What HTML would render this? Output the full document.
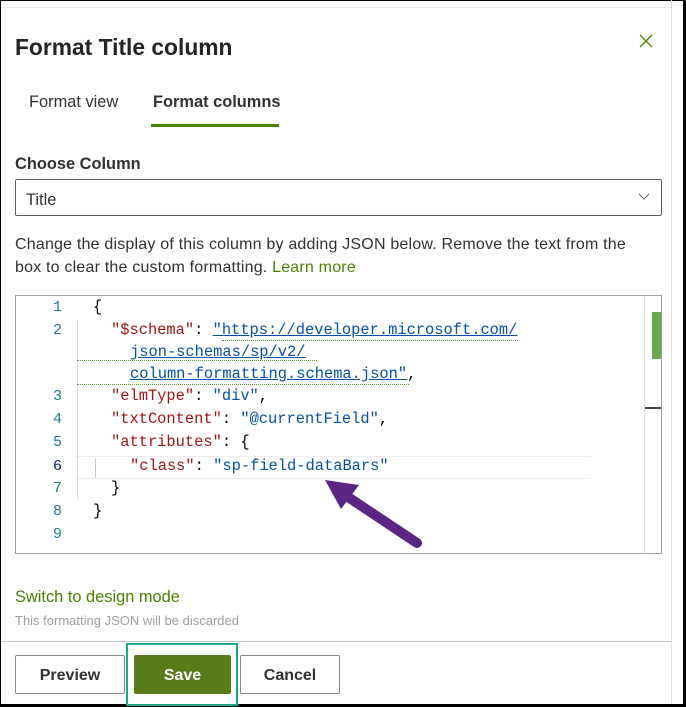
<!DOCTYPE html>
<html><head><meta charset="utf-8"><style>
*{margin:0;padding:0;box-sizing:border-box}
body{width:686px;height:707px;background:#fff;font-family:"Liberation Sans",sans-serif;position:relative;overflow:hidden;color:#323130}
.abs{position:absolute}
.code{font-family:"Liberation Mono",monospace;font-size:15.4px;white-space:pre;line-height:23px}
.ln{position:absolute;left:40px;width:22px;text-align:right;color:#237893;font-family:"Liberation Mono",monospace;font-size:15px;line-height:23px}
.k{color:#a31515}.s{color:#0451a5}.p{color:#000}
.u{text-decoration:underline;text-decoration-color:#0451a5}
.btn{position:absolute;top:655px;height:39px;border:1px solid #8a8886;border-radius:2px;font-weight:bold;font-size:16px;display:flex;align-items:center;justify-content:center;color:#323130;padding-top:3px}
</style></head><body>
<div class="abs" style="left:0;top:0;width:686px;height:1px;background:#000"></div>
<div class="abs" style="left:0;top:0;width:1px;height:707px;background:#000"></div>
<div class="abs" style="left:683px;top:0;width:3px;height:707px;background:#000"></div>
<div class="abs" style="left:671px;top:0;width:1px;height:707px;background:#e1dfdd"></div>
<div class="abs" style="left:0;top:704px;width:686px;height:3px;background:#000"></div>
<div class="abs" style="left:1px;top:7px;width:670px;height:1px;background:#edebe9"></div>

<div class="abs" style="left:15px;top:34px;font-size:22.8px;font-weight:bold;color:#252423">Format Title column</div>
<svg class="abs" style="left:639px;top:34px" width="14" height="14"><path d="M1 1L13 13M13 1L1 13" stroke="#498205" stroke-width="1.3"/></svg>

<div class="abs" style="left:29px;top:93px;font-size:16.4px">Format view</div>
<div class="abs" style="left:153px;top:93px;font-size:16.4px;font-weight:bold">Format columns</div>
<div class="abs" style="left:151px;top:124px;width:128px;height:3px;background:#498205"></div>

<div class="abs" style="left:15px;top:155px;font-size:16.4px;font-weight:bold">Choose Column</div>
<div class="abs" style="left:15px;top:179px;width:647px;height:37px;border:1px solid #605e5c;border-radius:2px"></div>
<div class="abs" style="left:26px;top:191px;font-size:16.4px">Title</div>
<svg class="abs" style="left:638px;top:193px" width="12" height="8"><path d="M1 1L6 6L11 1" fill="none" stroke="#605e5c" stroke-width="1"/></svg>

<div class="abs" style="left:15px;top:233px;width:640px;font-size:16px;letter-spacing:0.2px;line-height:23px">Change the display of this column by adding JSON below. Remove the text from the box to clear the custom formatting. <span style="color:#498205">Learn more</span></div>

<div class="abs" style="left:15px;top:295px;width:647px;height:259px;border:1px solid #a19f9d"></div>
<div class="abs" style="left:644px;top:296px;width:1px;height:257px;background:#e1dfdd"></div>
<div class="abs" style="left:652px;top:312px;width:9px;height:47px;background:#6aa84f"></div>
<div class="abs" style="left:645px;top:407px;width:16px;height:2px;background:#444"></div>
<div class="abs" style="left:76px;top:456px;width:515px;height:23px;border-top:1px solid #eee;border-bottom:1px solid #eee"></div>
<div class="abs" style="left:77px;top:320px;width:1px;height:180px;background:#ddd"></div>
<div class="abs" style="left:95px;top:458px;width:1px;height:20px;background:#ccc"></div>

<div class="ln" style="top:296px">1</div>
<div class="ln" style="top:319px">2</div>
<div class="ln" style="top:385px">3</div>
<div class="ln" style="top:408px">4</div>
<div class="ln" style="top:431px">5</div>
<div class="ln" style="top:455px;color:#0b216f">6</div>
<div class="ln" style="top:477px">7</div>
<div class="ln" style="top:500px">8</div>
<div class="ln" style="top:523px">9</div>

<div class="abs code" style="left:93px;top:296px"><span class="p">{</span></div>
<div class="abs code" style="left:111px;top:319px"><span class="k">"$schema"</span><span class="p">: </span><span class="s u">"https://developer.microsoft.com/</span></div>
<div class="abs code" style="left:130px;top:341px"><span class="s u">json-schemas/sp/v2/</span></div>
<div class="abs code" style="left:130px;top:363px"><span class="s u">column-formatting.schema.json"</span><span class="p">,</span></div>
<div class="abs" style="left:77px;top:360px;width:240px;border-bottom:1px dotted #5a9a2a"></div>
<div class="abs" style="left:77px;top:384px;width:332px;border-bottom:1px dotted #5a9a2a"></div>
<div class="abs" style="left:222px;top:340px;width:296px;border-bottom:1px dotted #5a9a2a"></div>
<div class="abs code" style="left:111px;top:385px"><span class="k">"elmType"</span><span class="p">: </span><span class="s">"div"</span><span class="p">,</span></div>
<div class="abs code" style="left:111px;top:408px"><span class="k">"txtContent"</span><span class="p">: </span><span class="s">"@currentField"</span><span class="p">,</span></div>
<div class="abs code" style="left:111px;top:431px"><span class="k">"attributes"</span><span class="p">: {</span></div>
<div class="abs code" style="left:130px;top:455px"><span class="k">"class"</span><span class="p">: </span><span class="s">"sp-field-dataBars"</span></div>
<div class="abs code" style="left:111px;top:477px"><span class="p">}</span></div>
<div class="abs code" style="left:93px;top:500px"><span class="p">}</span></div>

<svg class="abs" style="left:0;top:0" width="686" height="707">
<line x1="348" y1="497" x2="417" y2="543" stroke="#5c2483" stroke-width="10" stroke-linecap="round"/>
<polygon points="325,480 359,485 341,509" fill="#5c2483"/>
</svg>

<div class="abs" style="left:15px;top:588px;font-size:16.4px;color:#498205">Switch to design mode</div>
<div class="abs" style="left:15px;top:613px;font-size:13px;color:#a19f9d">This formatting JSON will be discarded</div>
<div class="abs" style="left:1px;top:641px;width:670px;height:1px;background:#c8c6c4"></div>

<div class="btn" style="left:15px;width:110px">Preview</div>
<div class="abs" style="left:126px;top:643px;width:112px;height:63px;border:2px solid #1aab8a"></div>
<div class="btn" style="left:134px;top:655px;width:97px;background:#5a7b1a;border-color:#5a7b1a;color:#fff">Save</div>
<div class="btn" style="left:240px;width:100px">Cancel</div>
</body></html>
